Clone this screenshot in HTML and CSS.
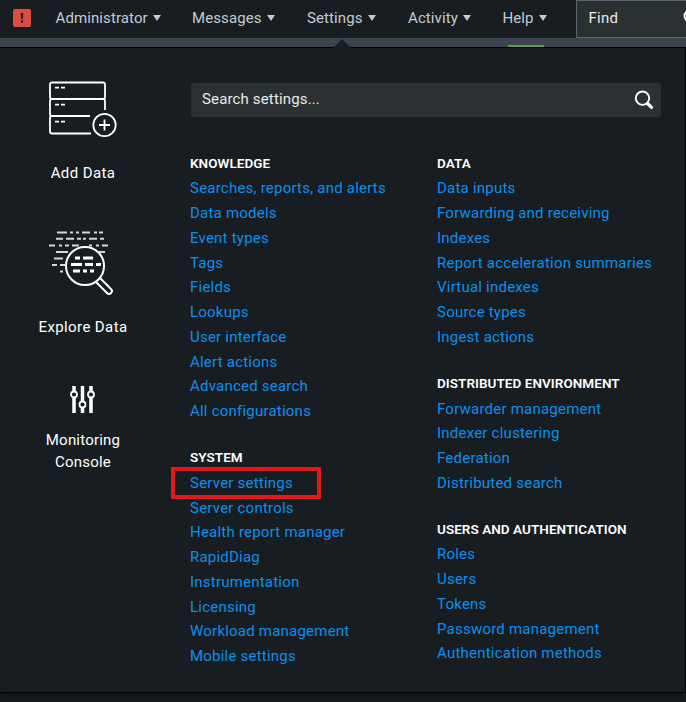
FILE: index.html
```html
<!DOCTYPE html>
<html lang="en">
<head>
<meta charset="utf-8">
<title>Settings</title>
<link rel="stylesheet" href="styles.css">
</head>
<body>
<header class="topbar">
  <div class="alert"><svg width="18" height="18" viewBox="0 0 18 18"><path d="M7.700 4h2.600l-.5 6H8.200z" fill="#171d21"/><circle cx="9" cy="12.500" r="1.300" fill="#171d21"/></svg></div>
  <nav class="menu">
    <a>Administrator</a>
    <a>Messages</a>
    <a>Settings</a>
    <a>Activity</a>
    <a>Help</a>
  </nav>
  <div class="find"><span>Find</span><svg class="find-icon" width="18" height="18" viewBox="0 0 18 18" fill="none" stroke="#fff" stroke-width="2"><circle cx="7" cy="7" r="5.500"/><path d="M11 11l6 6"/></svg></div>
</header>
<div class="strip"><i class="pointer"></i><i class="marker"></i></div>
<main class="panel">
  <aside class="side">
    <a class="tile add">
      <svg width="70" height="58" viewBox="0 0 70 58" fill="none" stroke="#fff" stroke-width="1.800">
        <path d="M43 53.500H4q-2 0-2-2V38q0-2 2-2h38M4 36q-2 0-2-2V21q0-2 2-2h51q2 0 2 2v9M4 19q-2 0-2-2V4.500q0-2 2-2h51q2 0 2 2V17q0 2-2 2"/>
        <path d="M7 7.700h4m2 0h4M7 24.700h4m2 0h4M7 41.700h4m2 0h4"/>
        <circle cx="56.500" cy="45" r="11.200"/><path d="M51 45h11M56.500 39.500v11"/>
      </svg>
      <span>Add Data</span>
    </a>
    <a class="tile explore">
      <svg width="66" height="66" viewBox="0 0 66 66" fill="none" stroke="#fff" stroke-width="2">
        <path stroke="#d5d7d8" d="M9 2.500h10m3 0h3m3 0h3m3 0h8m4 0h3m2 0h4M8 8.700h7m3 0h8m3 0h4m2 0h3m3 0h8m3 0h4M1 15.500h6m4 0h3m3 0h4m3 0h7m10 0h3m4 0h3m3 0h6M8 22h12m29 0h8M6 28.500h9M4 35h5m3 0h5M12 41.500h3"/>
        <circle cx="37" cy="36" r="19"/>
        <path stroke-width="3" d="M27 28h5m3 0h10M23 34.500h11m3 0h8m3 0h5M25 41h7m3 0h4m3 0h4"/>
        <path d="M48 52l11 11q2 2 4 0t0-4L52 48"/>
      </svg>
      <span>Explore Data</span>
    </a>
    <a class="tile monitor">
      <svg width="26" height="28" viewBox="0 0 26 28" fill="none" stroke="#fff">
        <path stroke-width="3.500" d="M5 0v5m0 7v15M13.500 0v15m0 7v5M22 0v5m0 7v15"/>
        <g stroke-width="1.800"><circle cx="5" cy="8.500" r="3"/><circle cx="13.500" cy="18.500" r="3"/><circle cx="22" cy="8.500" r="3"/></g>
      </svg>
      <span>Monitoring<br>Console</span>
    </a>
  </aside>
  <section class="content">
    <div class="search"><span>Search settings...</span><svg width="20" height="20" viewBox="0 0 20 20" fill="none" stroke="#fff"><circle cx="8.500" cy="8.200" r="6.700" stroke-width="1.900"/><path d="M13.500 13.500l4 3.800" stroke-width="3.200" stroke-linecap="round"/></svg></div>
    <div class="columns">
      <div class="column">
        <section class="group"><h2>KNOWLEDGE</h2><ul>
          <li>Searches, reports, and alerts</li><li>Data models</li><li>Event types</li><li>Tags</li><li>Fields</li><li>Lookups</li><li>User interface</li><li>Alert actions</li><li>Advanced search</li><li>All configurations</li></ul></section>
        <section class="group"><h2>SYSTEM</h2><ul>
          <li class="marked">Server settings</li><li>Server controls</li><li>Health report manager</li><li>RapidDiag</li><li>Instrumentation</li><li>Licensing</li><li>Workload management</li><li>Mobile settings</li></ul></section>
      </div>
      <div class="column">
        <section class="group"><h2>DATA</h2><ul>
          <li>Data inputs</li><li>Forwarding and receiving</li><li>Indexes</li><li>Report acceleration summaries</li><li>Virtual indexes</li><li>Source types</li><li>Ingest actions</li></ul></section>
        <section class="group"><h2>DISTRIBUTED ENVIRONMENT</h2><ul>
          <li>Forwarder management</li><li>Indexer clustering</li><li>Federation</li><li>Distributed search</li></ul></section>
        <section class="group"><h2>USERS AND AUTHENTICATION</h2><ul>
          <li>Roles</li><li>Users</li><li>Tokens</li><li>Password management</li><li>Authentication methods</li></ul></section>
      </div>
    </div>
  </section>
</main>
</body>
</html>
```
FILE: styles.css
```css
*, *::before, *::after { box-sizing: border-box; }
body { margin: 0; width: 686px; height: 702px; overflow: hidden; background: #171d21; color: #fff; font: 15px/22px Roboto, "Liberation Sans", sans-serif; }
svg { display: block; }
.topbar { display: flex; height: 38px; color: #c3cbd4; }
.alert { flex: none; width: 18px; height: 18px; margin: 9px 0 0 13px; border-radius: 2px; background: #dc4e41; }
.menu { display: grid; grid-template-columns: 136.500px 115px 101px 94.500px 73px; width: 520px; margin-left: 24.500px; line-height: 36px; letter-spacing: .1px; }
.menu a { white-space: nowrap; }
.menu a::after { content: ""; display: inline-block; margin-left: 5px; border: 4.500px solid transparent; border-top: 6px solid #c3cbd4; border-bottom: 0; vertical-align: 2px; }
.find { position: relative; flex: none; width: 120px; height: 38px; border: 1px solid #5c6773; background: #2b3033; padding-left: 12px; line-height: 34px; letter-spacing: .3px; color: #e8eaec; }
.find-icon { position: absolute; left: 106px; top: 8px; }
.strip { position: relative; height: 9px; background: #3c444d; }
.pointer { position: absolute; left: 333px; top: 1px; border: 9px solid transparent; border-bottom-color: #171d21; border-top: 0; z-index: 1; }
.marker { position: absolute; left: 508px; top: 7px; width: 36px; height: 2px; background: #53a051; }
.panel { display: flex; height: 646px; border: solid #000; border-width: 1px 1px 1px 0; box-shadow: 0 2px 7px #0b1117; }
.side { width: 166px; text-align: center; flex: none; letter-spacing: .4px; }
.tile { display: flex; flex-direction: column; align-items: center; }
.add { height: 180px; padding-top: 32px; }
.add span { margin-top: 24px; }
.explore { height: 156px; padding-top: 2px; }
.explore svg { margin-right: 4px; }
.explore span { margin-top: 20px; }
.monitor svg { margin-top: 2px; margin-right: 2px; }
.monitor span { margin-top: 15px; letter-spacing: .2px; }
.content { padding: 35px 0 0 24px; }
.search { display: flex; justify-content: space-between; align-items: center; width: 470px; height: 34px; margin-left: 1px; padding: 0 7px 0 11px; border-radius: 2px; background: #2b3033; color: #e8eaec; letter-spacing: .15px; }
.search span { margin-top: -2px; }
.columns { display: grid; grid-template-columns: 247px 240px; margin-top: 35px; }
.group { margin-bottom: 22.500px; }
h2 { margin: 0 0 2.400px; font-size: 13.500px; font-weight: 600; line-height: 22px; letter-spacing: .05px; white-space: nowrap; }
ul { margin: 0; padding: 0; list-style: none; }
li { position: relative; height: 24.750px; line-height: 24.750px; color: #0b90f0; letter-spacing: .22px; white-space: nowrap; }
.marked::after { content: ""; position: absolute; left: -19px; top: -4px; width: 150px; height: 32px; border: 4px solid #e1191c; z-index: 1; }
```
